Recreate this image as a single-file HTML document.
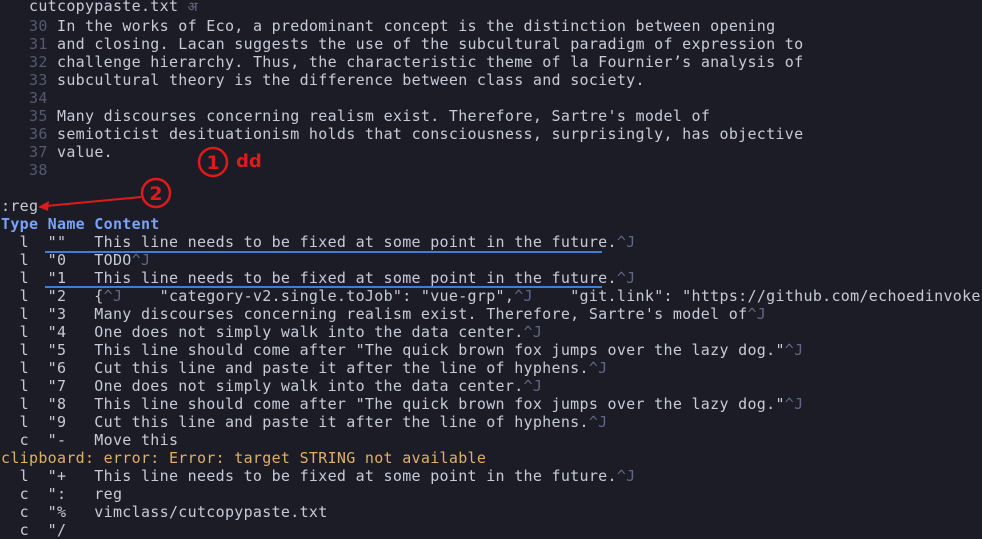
<!DOCTYPE html>
<html><head><meta charset="utf-8"><style>
html,body{margin:0;padding:0;background:#1b1c26;width:982px;height:527px;overflow:hidden;}
pre{position:absolute;left:1px;top:-3px;margin:0;font-family:"DejaVu Sans Mono","Liberation Mono",monospace;font-size:15px;line-height:18px;color:#c8cad8;white-space:pre;letter-spacing:0.3px;}
.n{color:#565a6e}.h{color:#7aa2f7;font-weight:bold}.j{color:#5f6786}.y{color:#e0af68}.i{color:#6b6f85;font-size:13px}
.u{position:absolute;height:2px;background:#3d7fd0;left:45px;width:557px}
</style></head><body>
<pre>   cutcopypaste.txt <span class="i">अ</span>
<span class="n">   30 </span>In the works of Eco, a predominant concept is the distinction between opening
<span class="n">   31 </span>and closing. Lacan suggests the use of the subcultural paradigm of expression to
<span class="n">   32 </span>challenge hierarchy. Thus, the characteristic theme of la Fournier’s analysis of
<span class="n">   33 </span>subcultural theory is the difference between class and society.
<span class="n">   34 </span>
<span class="n">   35 </span>Many discourses concerning realism exist. Therefore, Sartre's model of
<span class="n">   36 </span>semioticist desituationism holds that consciousness, surprisingly, has objective
<span class="n">   37 </span>value.
<span class="n">   38 </span>

:reg
<span class="h">Type Name Content</span>
  l  ""   This line needs to be fixed at some point in the future.<span class="j">^J</span>
  l  "0   TODO<span class="j">^J</span>
  l  "1   This line needs to be fixed at some point in the future.<span class="j">^J</span>
  l  "2   {<span class="j">^J</span>    "category-v2.single.toJob": "vue-grp",<span class="j">^J</span>    "git.link": "https://github.com/echoedinvoker/vue
  l  "3   Many discourses concerning realism exist. Therefore, Sartre's model of<span class="j">^J</span>
  l  "4   One does not simply walk into the data center.<span class="j">^J</span>
  l  "5   This line should come after "The quick brown fox jumps over the lazy dog."<span class="j">^J</span>
  l  "6   Cut this line and paste it after the line of hyphens.<span class="j">^J</span>
  l  "7   One does not simply walk into the data center.<span class="j">^J</span>
  l  "8   This line should come after "The quick brown fox jumps over the lazy dog."<span class="j">^J</span>
  l  "9   Cut this line and paste it after the line of hyphens.<span class="j">^J</span>
  c  "-   Move this
<span class="y">clipboard: error: Error: target STRING not available</span>
  l  "+   This line needs to be fixed at some point in the future.<span class="j">^J</span>
  c  ":   reg
  c  "%   vimclass/cutcopypaste.txt
  c  "/</pre>
<div class="u" style="top:251px"></div>
<div class="u" style="top:286px"></div>
<svg width="982" height="527" style="position:absolute;left:0;top:0" fill="none">
<circle cx="213" cy="162" r="14" stroke="#e01a1a" stroke-width="2.5"/>
<text x="213" y="169" text-anchor="middle" fill="#e01a1a" font-family="DejaVu Sans" font-weight="bold" font-size="19">1</text>
<text x="236" y="167" fill="#e01a1a" font-family="DejaVu Sans" font-weight="bold" font-size="18">dd</text>
<circle cx="156" cy="193" r="14" stroke="#e01a1a" stroke-width="2.5"/>
<text x="156" y="200" text-anchor="middle" fill="#e01a1a" font-family="DejaVu Sans" font-weight="bold" font-size="19">2</text>
<line x1="141" y1="197" x2="46" y2="206" stroke="#e01a1a" stroke-width="2"/>
<path d="M38 207 L49 201 L48 211 Z" fill="#e01a1a"/>
</svg>
</body></html>
